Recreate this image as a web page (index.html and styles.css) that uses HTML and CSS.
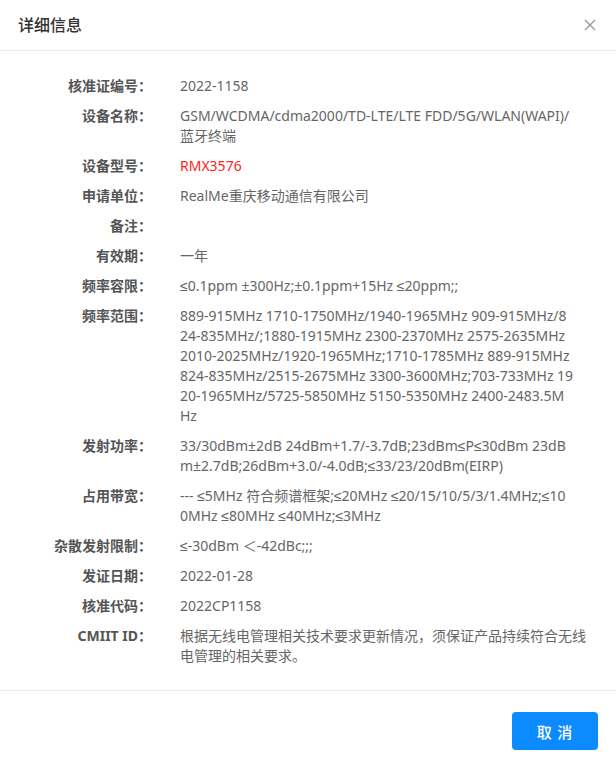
FILE: index.html
```html
<!DOCTYPE html>
<html lang="zh">
<head>
<meta charset="utf-8">
<title>详细信息</title>
<link rel="stylesheet" href="styles.css">
</head>
<body>
<div class="dialog">
  <div class="header">
    <div class="title">详细信息</div>
    <svg class="close" width="12" height="12" viewBox="0 0 12 12"><path d="M1 1L11 11M11 1L1 11" stroke="#999" stroke-width="1.4" fill="none"/></svg>
  </div>
  <div class="body">
    <div class="label">核准证编号：</div><div class="value">2022-1158</div>
    <div class="label">设备名称：</div><div class="value">GSM/WCDMA/cdma2000/TD-LTE/LTE FDD/5G/WLAN(WAPI)/<br>蓝牙终端</div>
    <div class="label">设备型号：</div><div class="value red">RMX3576</div>
    <div class="label">申请单位：</div><div class="value">RealMe重庆移动通信有限公司</div>
    <div class="label">备注：</div><div class="value"></div>
    <div class="label">有效期：</div><div class="value">一年</div>
    <div class="label">频率容限：</div><div class="value">≤0.1ppm ±300Hz;±0.1ppm+15Hz ≤20ppm;;</div>
    <div class="label">频率范围：</div><div class="value">889-915MHz 1710-1750MHz/1940-1965MHz 909-915MHz/8<br>24-835MHz/;1880-1915MHz 2300-2370MHz 2575-2635MHz<br>2010-2025MHz/1920-1965MHz;1710-1785MHz 889-915MHz<br>824-835MHz/2515-2675MHz 3300-3600MHz;703-733MHz 19<br>20-1965MHz/5725-5850MHz 5150-5350MHz 2400-2483.5M<br>Hz</div>
    <div class="label">发射功率：</div><div class="value">33/30dBm±2dB 24dBm+1.7/-3.7dB;23dBm≤P≤30dBm 23dB<br>m±2.7dB;26dBm+3.0/-4.0dB;≤33/23/20dBm(EIRP)</div>
    <div class="label">占用带宽：</div><div class="value">--- ≤5MHz 符合频谱框架;≤20MHz ≤20/15/10/5/3/1.4MHz;≤10<br>0MHz ≤80MHz ≤40MHz;≤3MHz</div>
    <div class="label">杂散发射限制：</div><div class="value">≤-30dBm ＜-42dBc;;;</div>
    <div class="label">发证日期：</div><div class="value">2022-01-28</div>
    <div class="label">核准代码：</div><div class="value">2022CP1158</div>
    <div class="label">CMIIT ID：</div><div class="value">根据无线电管理相关技术要求更新情况，须保证产品持续符合无线<br>电管理的相关要求。</div>
  </div>
  <div class="footer">
    <button class="btn" type="button">取 消</button>
  </div>
</div>
</body>
</html>
```
FILE: styles.css
```css
html, body {
  margin: 0;
  padding: 0;
  background: #fff;
}
body {
  font-family: "Noto Sans", "Liberation Sans", "Noto Sans CJK SC", sans-serif;
  width: 616px;
  height: 758px;
  overflow: hidden;
}
.dialog {
  width: 616px;
  height: 758px;
  display: flex;
  flex-direction: column;
}
.header {
  height: 51px;
  border-bottom: 1px solid #e8e8e8;
  display: flex;
  align-items: center;
  justify-content: space-between;
  padding: 0 20px 0 18px;
}
.title {
  font-size: 16px;
  color: #333;
  font-weight: 500;
  line-height: 22px;
}
.close {
  display: block;
}
.body {
  display: grid;
  grid-template-columns: 152px 1fr;
  column-gap: 28px;
  row-gap: 10px;
  padding: 25px 0 24px 0;
  border-bottom: 1px solid #e8e8e8;
  font-size: 14px;
  line-height: 20px;
}
.label {
  text-align: right;
  font-weight: 700;
  color: #555;
  white-space: nowrap;
}
.value {
  color: #666;
  white-space: nowrap;
  min-height: 20px;
}
.value.red {
  color: #ff2222;
}
.footer {
  display: flex;
  justify-content: flex-end;
  padding: 21px 18px 8px 0;
}
.btn {
  width: 86px;
  height: 38px;
  border: none;
  border-radius: 4px;
  background: #0b8bff;
  color: #fff;
  font-family: "Noto Sans CJK SC", sans-serif;
  font-size: 15px;
  font-weight: 500;
  letter-spacing: 1px;
  cursor: pointer;
}
```
